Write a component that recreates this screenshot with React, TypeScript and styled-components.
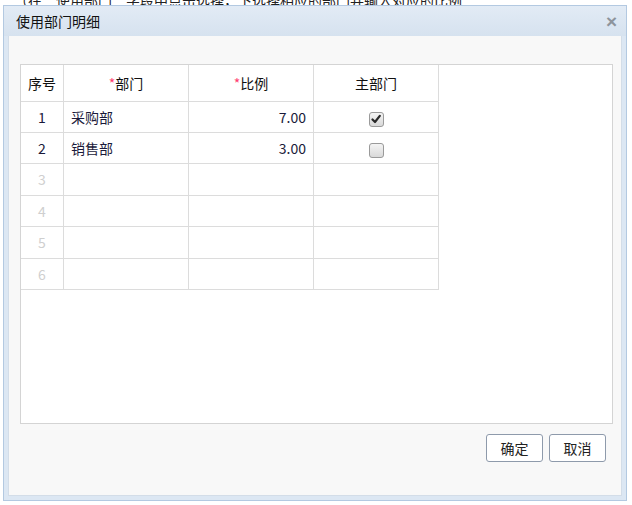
import React from 'react';
import styled, { createGlobalStyle } from 'styled-components';

const GlobalStyle = createGlobalStyle`
  html, body {
    margin: 0;
    padding: 0;
    background: #ffffff;
    font-family: "Noto Sans CJK SC", "Liberation Sans", sans-serif;
  }
`;

const Page = styled.div`
  width: 632px;
  height: 505px;
  display: flex;
  flex-direction: column;
  background: #ffffff;
  overflow: hidden;
`;

const BackdropLine = styled.div`
  height: 5px;
  display: flex;
  align-items: flex-end;
  overflow: hidden;
  padding-left: 14px;
  font-size: 14px;
  color: #222;
  white-space: nowrap;

  span {
    display: block;
    line-height: 14px;
    margin-bottom: -2px;
  }
`;

const Dialog = styled.div`
  margin-left: 3px;
  width: 622px;
  height: 494px;
  display: flex;
  flex-direction: column;
  border: 1px solid #b3c9e1;
  background: #dce7f3;
`;

const TitleBar = styled.div`
  height: 30px;
  flex-shrink: 0;
  display: flex;
  align-items: center;
  justify-content: space-between;
  padding: 0 9px 0 12px;
  background: linear-gradient(#e2ebf5, #d6e2ef);
`;

const Title = styled.div`
  font-size: 14px;
  color: #111;
`;

const Close = styled.div`
  font-family: "Liberation Sans", sans-serif;
  font-size: 19px;
  line-height: 19px;
  font-weight: bold;
  color: #8d949c;
`;

const Content = styled.div`
  flex: 1;
  margin: 0 4px 4px 4px;
  background: #f8f8f8;
  border: 1px solid #d3dde8;
  border-top: none;
  display: flex;
  flex-direction: column;
  padding: 28px 8px 0 11px;
`;

const GridPanel = styled.div`
  height: 358px;
  background: #ffffff;
  border: 1px solid #d4d4d4;
`;

const Table = styled.table`
  border-collapse: collapse;
  font-size: 14px;
  color: #111;

  td, th {
    border: 1px solid #dcdcdc;
    padding: 0 7px;
  }
  tr:first-child th {
    border-top: none;
  }
  tr td:first-child, tr th:first-child {
    border-left: none;
  }
`;

const HeadCell = styled.th<{ $w: number }>`
  width: ${({ $w }) => $w}px;
  height: 36px;
  font-weight: normal;
  text-align: center;
`;

const Star = styled.span`
  color: #ff4070;
`;

const Cell = styled.td<{ $align?: string; $muted?: boolean }>`
  height: 30px;
  text-align: ${({ $align }) => $align || 'left'};
  color: ${({ $muted }) => ($muted ? '#cfcfcf' : '#1a1a3a')};
`;

const EmptyCell = styled(Cell)`
  height: 30.5px;
`;

const Box = styled.span`
  display: inline-flex;
  align-items: center;
  justify-content: center;
  width: 13px;
  height: 13px;
  border: 1px solid #9a9a9a;
  border-radius: 3px;
  background: linear-gradient(#f4f4f4, #d9d9d9);
  vertical-align: middle;
`;

const Footer = styled.div`
  display: flex;
  justify-content: flex-end;
  gap: 6px;
  padding: 10px 7px 0 0;
`;

const Button = styled.button`
  width: 57px;
  height: 28px;
  border: 1px solid #8e9aab;
  border-radius: 3px;
  background: #ffffff;
  font-family: "Noto Sans CJK SC", sans-serif;
  font-size: 14px;
  color: #222;
  padding: 0;
`;

const rows = [
  { no: 1, dept: '采购部', ratio: '7.00', main: true },
  { no: 2, dept: '销售部', ratio: '3.00', main: false },
];

const Check = () => (
  <svg width="10" height="10" viewBox="0 0 10 10">
    <path d="M1.5 5.5 L4 8 L8.8 1.8" fill="none" stroke="#2a2a2a" strokeWidth="2.2" strokeLinecap="round" strokeLinejoin="round" />
  </svg>
);

export default function App() {
  return (
    <Page>
      <GlobalStyle />
      <BackdropLine>
        <span>（在“使用部门”字段中点击选择，下选择相应的部门并输入对应的比例</span>
      </BackdropLine>
      <Dialog>
        <TitleBar>
          <Title>使用部门明细</Title>
          <Close>×</Close>
        </TitleBar>
        <Content>
          <GridPanel>
            <Table>
              <tbody>
                <tr>
                  <HeadCell $w={28}>序号</HeadCell>
                  <HeadCell $w={110}><Star>*</Star>部门</HeadCell>
                  <HeadCell $w={110}><Star>*</Star>比例</HeadCell>
                  <HeadCell $w={110}>主部门</HeadCell>
                </tr>
                {rows.map((r) => (
                  <tr key={r.no}>
                    <Cell $align="center">{r.no}</Cell>
                    <Cell>{r.dept}</Cell>
                    <Cell $align="right">{r.ratio}</Cell>
                    <Cell $align="center">
                      <Box>{r.main && <Check />}</Box>
                    </Cell>
                  </tr>
                ))}
                {[3, 4, 5, 6].map((n) => (
                  <tr key={n}>
                    <EmptyCell $align="center" $muted>{n}</EmptyCell>
                    <EmptyCell />
                    <EmptyCell />
                    <EmptyCell />
                  </tr>
                ))}
              </tbody>
            </Table>
          </GridPanel>
          <Footer>
            <Button>确定</Button>
            <Button>取消</Button>
          </Footer>
        </Content>
      </Dialog>
    </Page>
  );
}
